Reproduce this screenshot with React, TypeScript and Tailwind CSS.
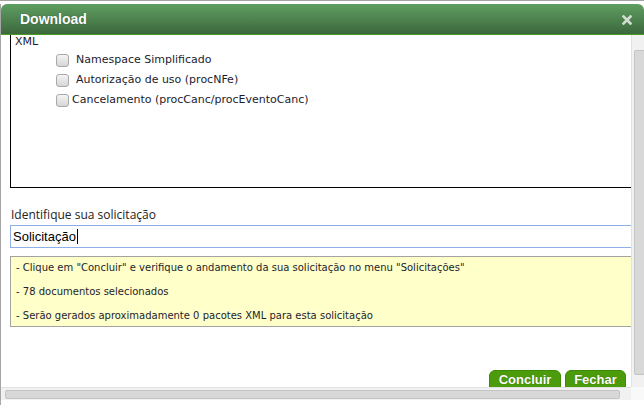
import React from "react";

function Check() {
  return (
    <span className="inline-block w-[13px] h-[13px] rounded-[3px] border border-[#a9a9a9] bg-gradient-to-b from-[#f4f4f4] to-[#d6d6d6] shrink-0" />
  );
}

export default function App() {
  const dv = { fontFamily: '"DejaVu Sans", Verdana, sans-serif' };
  return (
    <div className="w-[644px] h-[405px] bg-white overflow-hidden flex flex-col">
      <div className="h-px bg-[#a3a3a3] shrink-0" />
      <div className="h-[3px] bg-white shrink-0" />
      <div className="flex-1 flex flex-col border-l border-[#a6a6a6] min-h-0">
        {/* header */}
        <div className="h-[31px] shrink-0 rounded-t-[6px] bg-gradient-to-b from-[#5f9f62] to-[#3c683d] border-b border-[#4c9a1c] flex items-center justify-between pl-[19px] pr-[12px]">
          <span
            className="text-white font-bold text-[14px] leading-none [text-shadow:0_0_1px_rgba(0,0,0,0.5)]"
            style={{ fontFamily: '"Liberation Sans", Arial, sans-serif' }}
          >
            Download
          </span>
          <svg width="10" height="10" viewBox="0 0 10 10" className="mt-[1px]">
            <path d="M1.5 1.5 L8.5 8.5 M8.5 1.5 L1.5 8.5" stroke="#d3ded3" strokeWidth="2.6" strokeLinecap="square" />
          </svg>
        </div>
        {/* body */}
        <div className="flex h-[352px] shrink-0">
          <div className="w-[630px] h-[352px] overflow-hidden flex flex-col">
            <div className="ml-[9px] w-[640px] h-[153px] border-l border-b border-black shrink-0 flex flex-col" style={dv}>
              <div className="pl-[4px] text-[11px] leading-[13px] text-[#1c1c2c]">XML</div>
              <div className="mt-[2px] flex flex-col pl-[45px] text-[11px] text-[#1c1c2c]">
                <div className="h-[20px] flex items-center">
                  <Check />
                  <span className="pl-[7px]">Namespace Simplificado</span>
                </div>
                <div className="h-[20px] flex items-center">
                  <Check />
                  <span className="pl-[7px]">Autorização de uso (procNFe)</span>
                </div>
                <div className="h-[20px] flex items-center">
                  <Check />
                  <span className="pl-[3px]">Cancelamento (procCanc/procEventoCanc)</span>
                </div>
              </div>
            </div>
            <div
              className="mt-[19px] ml-[10px] text-[12px] leading-[16px] text-[#222]"
              style={{ fontFamily: '"Open Sans", sans-serif' }}
            >
              Identifique sua solicitação
            </div>
            <div className="mt-[2px] ml-[9px] w-[640px] h-[23px] border border-[#8eaee6] bg-white flex items-center pl-[2px] shrink-0">
              <span className="text-[13px] text-black" style={{ fontFamily: '"Liberation Sans", Arial, sans-serif' }}>
                Solicitação
              </span>
              <span className="inline-block w-px h-[15px] bg-black ml-[1px]" />
            </div>
            <div
              className="mt-[8px] ml-[9px] w-[640px] border border-[#a3a3a3] bg-[#ffffca] pt-[4px] pb-[3px] pl-[5px] flex flex-col gap-[10px] text-[10px] leading-[14px] text-[#1e1e2a] shrink-0"
              style={dv}
            >
              <div>- Clique em "Concluir" e verifique o andamento da sua solicitação no menu "Solicitações"</div>
              <div>- 78 documentos selecionados</div>
              <div>- Serão gerados aproximadamente 0 pacotes XML para esta solicitação</div>
            </div>
            <div className="mt-[43px] flex justify-end gap-[4px] pr-[5px] shrink-0">
              <button
                className="w-[72px] h-[22px] rounded-[6px] bg-[#4b9b0a] border border-[#3d8a04] text-white font-bold text-[13px] leading-[17px] flex justify-center [text-shadow:0_0_1px_rgba(0,0,0,0.4)]"
                style={{ fontFamily: '"Liberation Sans", Arial, sans-serif' }}
              >
                Concluir
              </button>
              <button
                className="w-[61px] h-[22px] rounded-[6px] bg-[#4b9b0a] border border-[#3d8a04] text-white font-bold text-[13px] leading-[17px] flex justify-center [text-shadow:0_0_1px_rgba(0,0,0,0.4)]"
                style={{ fontFamily: '"Liberation Sans", Arial, sans-serif' }}
              >
                Fechar
              </button>
            </div>
          </div>
          {/* vertical scrollbar */}
          <div className="w-[13px] h-[352px] bg-[#f1f1f1] border-l border-[#e2e2e2] flex flex-col pt-[15px] pl-[2px]">
            <div className="h-[325px] w-[11px] bg-[#d8d8d8] border border-[#c3c3c3] rounded-[2px]" />
          </div>
        </div>
        {/* horizontal scrollbar */}
        <div className="h-[13px] shrink-0 flex">
          <div className="w-[630px] bg-[#f1f1f1] border-t border-[#e2e2e2] pl-[4px] pt-[2px]">
            <div className="w-[615px] h-[9px] bg-[#d8d8d8] border border-[#c3c3c3] rounded-[2px]" />
          </div>
          <div className="w-[13px] bg-[#f9f9f9]" />
        </div>
        <div className="flex-1 bg-white" />
      </div>
    </div>
  );
}
